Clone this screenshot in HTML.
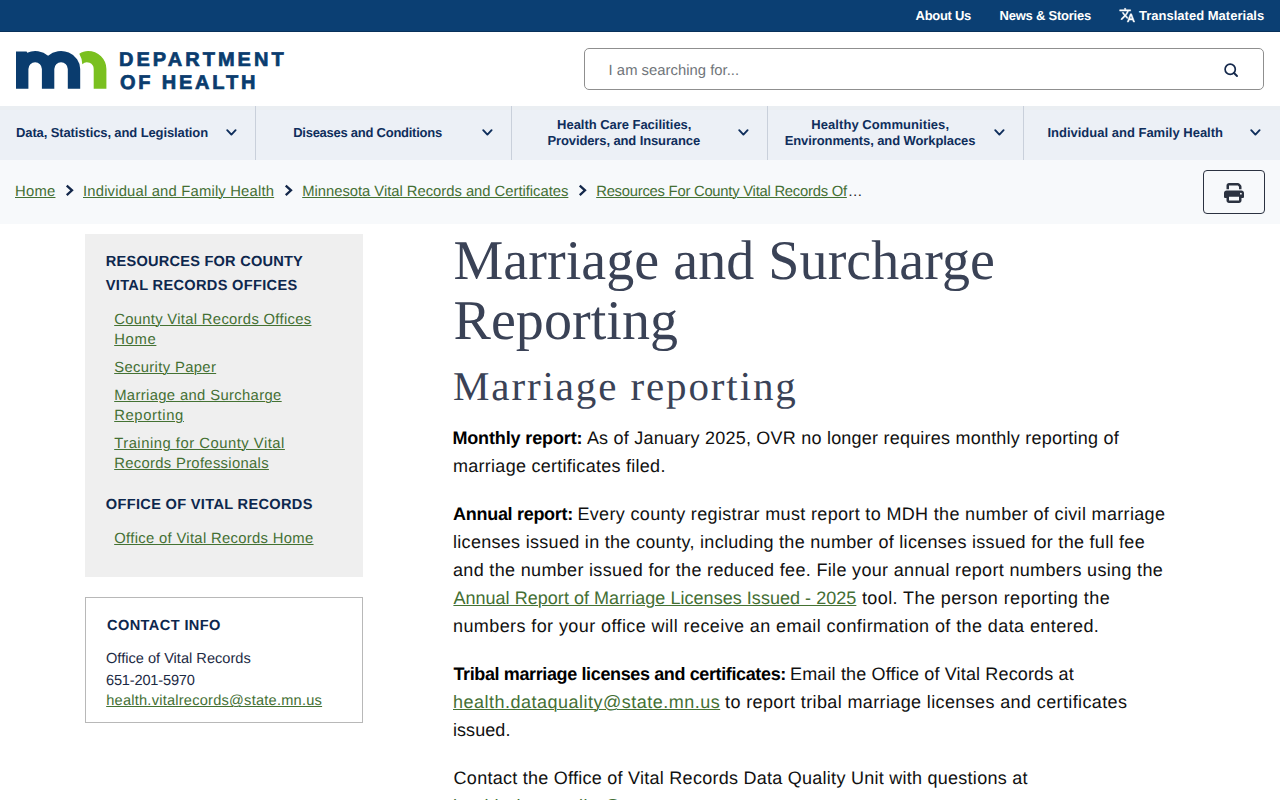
<!DOCTYPE html>
<html lang="en">
<head>
<meta charset="utf-8">
<title>Marriage and Surcharge Reporting - MN Dept. of Health</title>
<style>
*{box-sizing:border-box;margin:0;padding:0}
html,body{width:1280px;height:800px;overflow:hidden;background:#fff}
body{font-family:"Liberation Sans",sans-serif;color:#111;position:relative;text-rendering:geometricPrecision;font-variant-ligatures:none}
.t{position:absolute;white-space:pre;line-height:1;display:block}
.sf{font-family:"Liberation Serif",serif}
.b{font-weight:bold}
.lg{-webkit-text-stroke:.7px #0a3c6e}
.lk{color:#446f34;text-decoration:underline;text-decoration-color:#447233;text-decoration-thickness:1.2px;text-underline-offset:1.2px}
.box{position:absolute}
svg{position:absolute;overflow:visible}
</style>
</head>
<body>
<!-- top utility bar -->
<div class="box" style="left:0;top:0;width:1280px;height:32px;background:#0b3f73;border-bottom:1px solid #08305a"></div>
<!-- search field -->
<div class="box" style="left:584px;top:48px;width:680px;height:42px;border:1px solid #8f8f8f;border-radius:5px;background:#fff"></div>
<!-- main navigation -->
<div class="box" style="left:0;top:106px;width:1280px;height:54px;background:#ecf0f6;box-shadow:inset 0 4px 0 #eaeef2"></div>
<div class="box" style="left:255px;top:106px;width:1px;height:54px;background:#c9d0db"></div>
<div class="box" style="left:511px;top:106px;width:1px;height:54px;background:#c9d0db"></div>
<div class="box" style="left:767px;top:106px;width:1px;height:54px;background:#c9d0db"></div>
<div class="box" style="left:1023px;top:106px;width:1px;height:54px;background:#c9d0db"></div>
<!-- breadcrumb strip -->
<div class="box" style="left:0;top:160px;width:1280px;height:64px;background:#f7f9fb"></div>
<div class="box" style="left:1203px;top:170px;width:62px;height:44px;border:1.4px solid #2b3240;border-radius:4px"></div>
<!-- sidebar boxes -->
<div class="box" style="left:85px;top:234px;width:278px;height:343px;background:#efefef"></div>
<div class="box" style="left:85px;top:597px;width:278px;height:126px;background:#fff;border:1px solid #b8b8b8"></div>
<!-- mn logo mark -->
<svg style="left:16px;top:51px" width="91" height="38" viewBox="0 0 91 38">
<path fill="#0a3c6e" d="M0,37.7V0.5H10.6L11.2,1.7A19.15,18 0 0 1 32.1,4.74A19.15,18 0 0 1 64.2,18V37.7H51.8V18A6.75,6.75 0 0 0 38.3,18V37.7H25.9V18A6.75,6.75 0 0 0 12.4,18V37.7Z"/>
<path fill="#7ac01f" d="M63.3,2.7C66,0.9 69,0 72,0A18.4,18 0 0 1 90.4,18V37.7H77.7V18A6.75,6.75 0 0 0 66.3,13.2Q66.2,7.6 63.3,2.7Z"/>
</svg>
<!-- translate icon -->
<svg style="left:1119.2px;top:7.1px" width="16.4" height="16.4" viewBox="0 0 24 24"><path fill="#fff" stroke="#fff" stroke-width="0.7" d="M12.87 15.07l-2.54-2.51.03-.03c1.74-1.94 2.98-4.17 3.71-6.53H17V4h-7V2H8v2H1v1.99h11.17C11.5 7.92 10.44 9.75 9 11.35 8.07 10.32 7.3 9.19 6.69 8h-2c.73 1.63 1.73 3.17 2.98 4.56l-5.09 5.02L4 19l5-5 3.11 3.11.76-2.04zM18.5 10h-2L12 22h2l1.12-3h4.75L21 22h2l-4.5-12zm-2.62 7l1.62-4.33L19.12 17h-3.24z"/></svg>
<!-- search icon -->
<svg style="left:1222px;top:61px" width="18" height="18" viewBox="0 0 18 18"><circle cx="8.2" cy="8.2" r="5.1" fill="none" stroke="#14284b" stroke-width="1.7"/><path d="M12,12L15,15" stroke="#14284b" stroke-width="1.9" stroke-linecap="round"/></svg>
<!-- nav chevrons -->
<svg style="left:226px;top:129px" width="11" height="8" viewBox="0 0 11 8"><path d="M1.2,1.2L5.4,5.6L9.6,1.2" fill="none" stroke="#0f2e5c" stroke-width="1.9" stroke-linecap="round" stroke-linejoin="round"/></svg>
<svg style="left:482px;top:129px" width="11" height="8" viewBox="0 0 11 8"><path d="M1.2,1.2L5.4,5.6L9.6,1.2" fill="none" stroke="#0f2e5c" stroke-width="1.9" stroke-linecap="round" stroke-linejoin="round"/></svg>
<svg style="left:738px;top:129px" width="11" height="8" viewBox="0 0 11 8"><path d="M1.2,1.2L5.4,5.6L9.6,1.2" fill="none" stroke="#0f2e5c" stroke-width="1.9" stroke-linecap="round" stroke-linejoin="round"/></svg>
<svg style="left:994px;top:129px" width="11" height="8" viewBox="0 0 11 8"><path d="M1.2,1.2L5.4,5.6L9.6,1.2" fill="none" stroke="#0f2e5c" stroke-width="1.9" stroke-linecap="round" stroke-linejoin="round"/></svg>
<svg style="left:1250px;top:129px" width="11" height="8" viewBox="0 0 11 8"><path d="M1.2,1.2L5.4,5.6L9.6,1.2" fill="none" stroke="#0f2e5c" stroke-width="1.9" stroke-linecap="round" stroke-linejoin="round"/></svg>
<!-- breadcrumb chevrons -->
<svg style="left:66px;top:185px" width="9" height="11" viewBox="0 0 9 11"><path d="M1.6,1.3L6,5.3L1.6,9.3" fill="none" stroke="#14284b" stroke-width="2.3" stroke-linecap="square" stroke-linejoin="miter"/></svg>
<svg style="left:284.6px;top:185px" width="9" height="11" viewBox="0 0 9 11"><path d="M1.6,1.3L6,5.3L1.6,9.3" fill="none" stroke="#14284b" stroke-width="2.3" stroke-linecap="square" stroke-linejoin="miter"/></svg>
<svg style="left:578.6px;top:185px" width="9" height="11" viewBox="0 0 9 11"><path d="M1.6,1.3L6,5.3L1.6,9.3" fill="none" stroke="#14284b" stroke-width="2.3" stroke-linecap="square" stroke-linejoin="miter"/></svg>
<!-- print icon -->
<svg style="left:1224px;top:182.5px" width="20" height="20" viewBox="0 0 512 512"><path fill="#2b3240" d="M128 0C92.700 0 64 28.700 64 64v96h64V64H354.700L384 93.300V160h64V93.300c0-17-6.700-33.300-18.700-45.300L400 18.700C388 6.700 371.700 0 354.700 0H128zM384 352v32 64H128V384 368 352H384zm64 32h32c17.700 0 32-14.300 32-32V256c0-35.300-28.700-64-64-64H64c-35.300 0-64 28.700-64 64v96c0 17.700 14.300 32 32 32H64v64c0 35.300 28.700 64 64 64H384c35.300 0 64-28.700 64-64V384zM432 248a24 24 0 1 1 0 48 24 24 0 1 1 0-48z"/></svg>

<span class="t b" style="left:915.60px;top:9.00px;font-size:13px;letter-spacing:-0.307px;color:#fff">About Us</span>
<span class="t b" style="left:999.50px;top:9.00px;font-size:13px;letter-spacing:-0.225px;color:#fff">News &amp; Stories</span>
<span class="t b" style="left:1139.00px;top:9.00px;font-size:13px;letter-spacing:0.012px;color:#fff">Translated Materials</span>
<span class="t b lg" style="left:119.00px;top:49.50px;font-size:20px;letter-spacing:3.023px;color:#0a3c6e">DEPARTMENT</span>
<span class="t b lg" style="left:120.00px;top:72.60px;font-size:20px;letter-spacing:2.799px;color:#0a3c6e">OF HEALTH</span>
<span class="t" style="left:608.60px;top:63.50px;font-size:14.8px;letter-spacing:0.028px;color:#70757a">I am searching for...</span>
<span class="t b" style="left:16.00px;top:126.00px;font-size:13px;letter-spacing:-0.114px;color:#0f2e5c">Data, Statistics, and Legislation</span>
<span class="t b" style="left:293.20px;top:126.00px;font-size:13px;letter-spacing:-0.257px;color:#0f2e5c">Diseases and Conditions</span>
<span class="t b" style="left:557.10px;top:118.00px;font-size:13px;letter-spacing:-0.037px;color:#0f2e5c">Health Care Facilities,</span>
<span class="t b" style="left:547.50px;top:134.00px;font-size:13px;letter-spacing:-0.118px;color:#0f2e5c">Providers, and Insurance</span>
<span class="t b" style="left:811.30px;top:118.00px;font-size:13px;letter-spacing:0.062px;color:#0f2e5c">Healthy Communities,</span>
<span class="t b" style="left:784.70px;top:134.00px;font-size:13px;letter-spacing:-0.098px;color:#0f2e5c">Environments, and Workplaces</span>
<span class="t b" style="left:1047.40px;top:126.00px;font-size:13px;letter-spacing:0.003px;color:#0f2e5c">Individual and Family Health</span>
<span class="t lk" style="left:15.00px;top:184.75px;font-size:14.8px;letter-spacing:0.248px">Home</span>
<span class="t lk" style="left:83.00px;top:184.75px;font-size:14.8px;letter-spacing:0.188px">Individual and Family Health</span>
<span class="t lk" style="left:302.20px;top:184.75px;font-size:14.8px;letter-spacing:-0.021px">Minnesota Vital Records and Certificates</span>
<span class="t lk" style="left:596.20px;top:184.75px;font-size:14.8px;letter-spacing:-0.242px">Resources For County Vital Records Of</span>
<span class="t" style="left:847.80px;top:184.75px;font-size:14.8px;color:#222">…</span>
<span class="t b" style="left:105.80px;top:255.30px;font-size:14.6px;letter-spacing:0.213px;color:#0d274d">RESOURCES FOR COUNTY</span>
<span class="t b" style="left:105.80px;top:278.80px;font-size:14.6px;letter-spacing:0.315px;color:#0d274d">VITAL RECORDS OFFICES</span>
<span class="t b" style="left:105.80px;top:498.10px;font-size:14.6px;letter-spacing:0.314px;color:#0d274d">OFFICE OF VITAL RECORDS</span>
<span class="t b" style="left:107.00px;top:618.80px;font-size:14.6px;letter-spacing:0.389px;color:#0d274d">CONTACT INFO</span>
<span class="t lk" style="left:114.20px;top:312.70px;font-size:14.8px;letter-spacing:0.310px">County Vital Records Offices</span>
<span class="t lk" style="left:114.20px;top:333.00px;font-size:14.8px;letter-spacing:0.682px">Home</span>
<span class="t lk" style="left:114.20px;top:360.80px;font-size:14.8px;letter-spacing:0.352px">Security Paper</span>
<span class="t lk" style="left:114.20px;top:388.90px;font-size:14.8px;letter-spacing:0.360px">Marriage and Surcharge</span>
<span class="t lk" style="left:114.20px;top:408.80px;font-size:14.8px;letter-spacing:0.620px">Reporting</span>
<span class="t lk" style="left:114.20px;top:436.70px;font-size:14.8px;letter-spacing:0.511px">Training for County Vital</span>
<span class="t lk" style="left:114.20px;top:456.70px;font-size:14.8px;letter-spacing:0.318px">Records Professionals</span>
<span class="t lk" style="left:114.20px;top:531.80px;font-size:14.8px;letter-spacing:0.325px">Office of Vital Records Home</span>
<span class="t" style="left:106.00px;top:651.70px;font-size:14.6px;letter-spacing:0.002px;color:#1c2a44">Office of Vital Records</span>
<span class="t" style="left:106.00px;top:673.70px;font-size:14.6px;letter-spacing:-0.179px;color:#1c2a44">651-201-5970</span>
<span class="t lk" style="left:106.20px;top:694.30px;font-size:14.6px;letter-spacing:0.234px">health.vitalrecords@state.mn.us</span>
<span class="t sf" style="left:453.50px;top:233.40px;font-size:56px;letter-spacing:0.061px;color:#3a4256">Marriage and Surcharge</span>
<span class="t sf" style="left:453.50px;top:292.70px;font-size:56px;letter-spacing:0.064px;color:#3a4256">Reporting</span>
<span class="t sf" style="left:453.00px;top:366.00px;font-size:41px;letter-spacing:1.883px;color:#3a4256">Marriage reporting</span>
<span class="t b" style="left:452.40px;top:429.00px;font-size:18px;letter-spacing:-0.129px;color:#000">Monthly report:</span>
<span class="t" style="left:586.90px;top:429.00px;font-size:18px;letter-spacing:0.218px;color:#111111">As of January 2025, OVR no longer requires monthly reporting of</span>
<span class="t" style="left:453.00px;top:457.00px;font-size:18px;letter-spacing:0.271px;color:#111111">marriage certificates filed.</span>
<span class="t b" style="left:453.10px;top:505.00px;font-size:18px;letter-spacing:-0.300px;color:#000">Annual report:</span>
<span class="t" style="left:577.40px;top:505.00px;font-size:18px;letter-spacing:0.339px;color:#111111">Every county registrar must report to MDH the number of civil marriage</span>
<span class="t" style="left:453.00px;top:533.00px;font-size:18px;letter-spacing:0.298px;color:#111111">licenses issued in the county, including the number of licenses issued for the full fee</span>
<span class="t" style="left:453.00px;top:561.00px;font-size:18px;letter-spacing:0.330px;color:#111111">and the number issued for the reduced fee. File your annual report numbers using the</span>
<span class="t lk" style="left:453.40px;top:589.00px;font-size:18px;letter-spacing:0.036px">Annual Report of Marriage Licenses Issued - 2025</span>
<span class="t" style="left:861.90px;top:589.00px;font-size:18px;letter-spacing:0.413px;color:#111111">tool. The person reporting the</span>
<span class="t" style="left:453.00px;top:617.00px;font-size:18px;letter-spacing:0.408px;color:#111111">numbers for your office will receive an email confirmation of the data entered.</span>
<span class="t b" style="left:453.40px;top:665.00px;font-size:18px;letter-spacing:-0.373px;color:#000">Tribal marriage licenses and certificates:</span>
<span class="t" style="left:790.00px;top:665.00px;font-size:18px;letter-spacing:0.151px;color:#111111">Email the Office of Vital Records at</span>
<span class="t lk" style="left:453.00px;top:693.00px;font-size:18px;letter-spacing:0.492px">health.dataquality@state.mn.us</span>
<span class="t" style="left:725.00px;top:693.00px;font-size:18px;letter-spacing:0.375px;color:#111111">to report tribal marriage licenses and certificates</span>
<span class="t" style="left:453.00px;top:721.00px;font-size:18px;letter-spacing:0.059px;color:#111111">issued.</span>
<span class="t" style="left:453.60px;top:769.00px;font-size:18px;letter-spacing:0.261px;color:#111111">Contact the Office of Vital Records Data Quality Unit with questions at</span>
<span class="t lk" style="left:453.00px;top:797.00px;font-size:18px;letter-spacing:0.492px">health.dataquality@state.mn.us</span>
</body>
</html>
